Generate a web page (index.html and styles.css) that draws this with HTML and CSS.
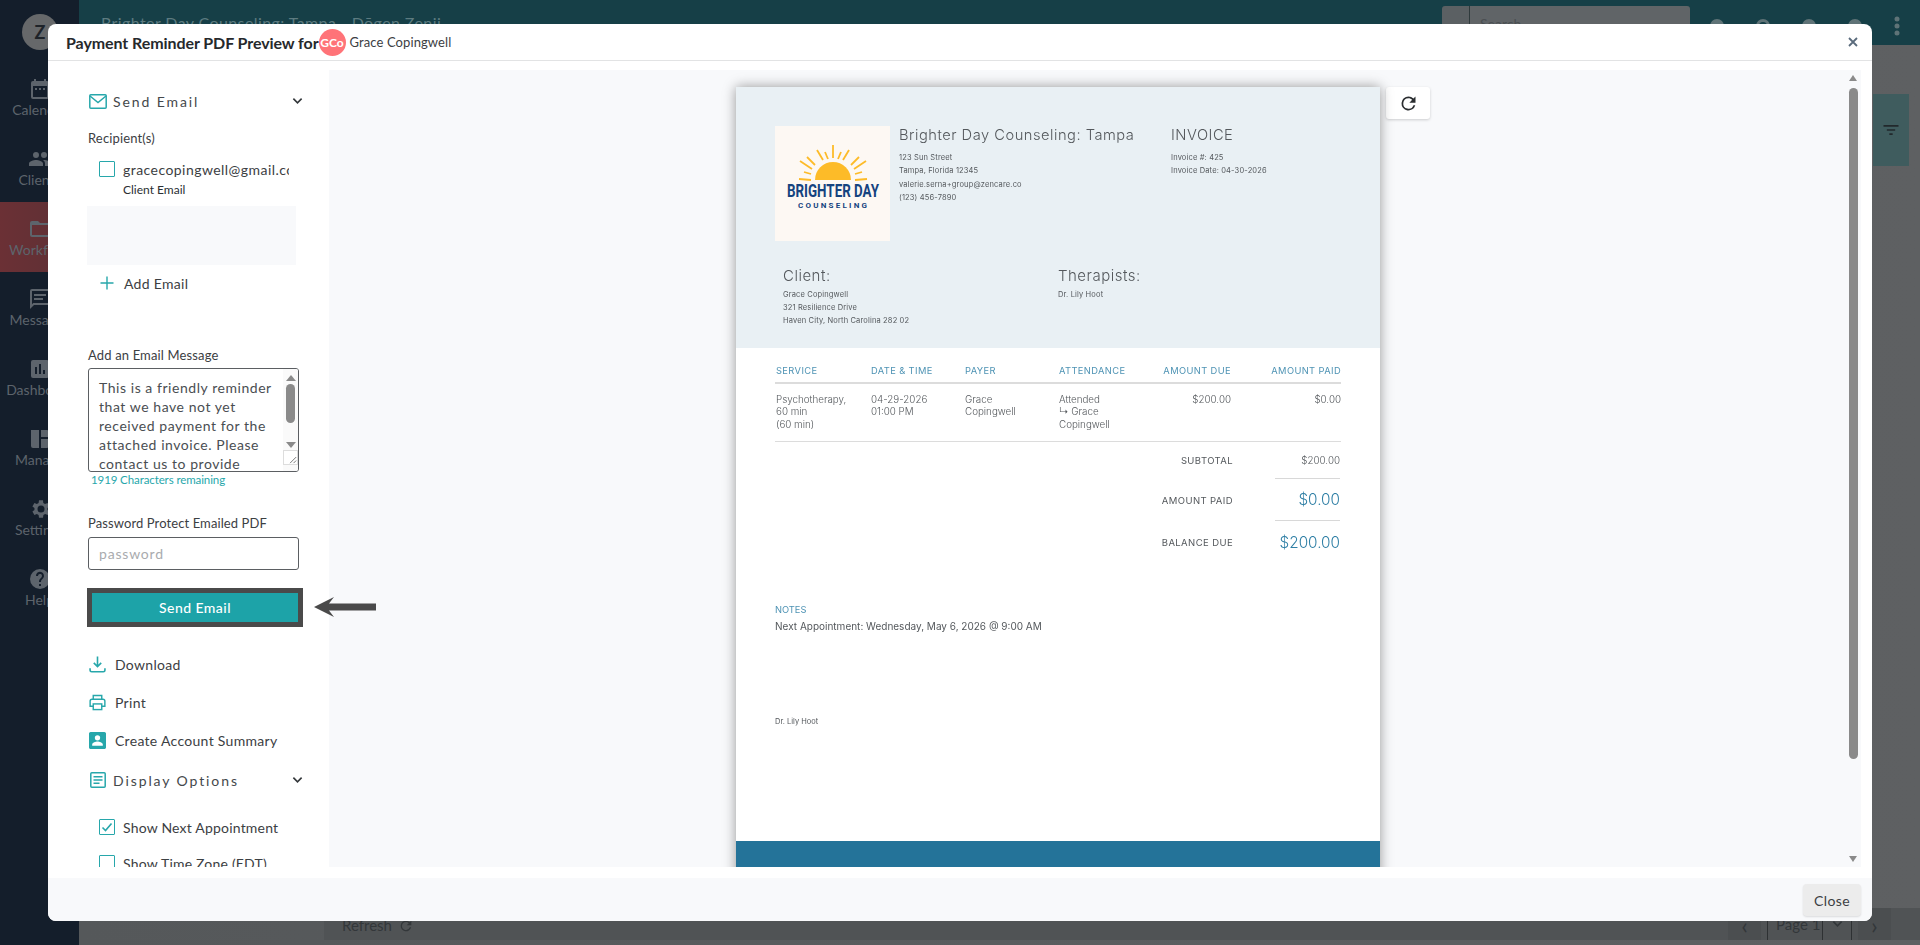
FILE: index.html
```html
<!DOCTYPE html>
<html lang="en">
<head>
  <meta charset="UTF-8">
  <title>Payment Reminder PDF Preview</title>
  <link rel="stylesheet" href="styles.css">
</head>
<body>

  <!-- Dimmed app behind the modal -->
  <div class="app">
    <nav class="app-nav">
      <div class="nav-avatar">Z</div>
      <div class="nav-item">
        <svg viewBox="0 0 24 24"><path d="M19 4h-1V2h-2v2H8V2H6v2H5a2 2 0 0 0-2 2v14a2 2 0 0 0 2 2h14a2 2 0 0 0 2-2V6a2 2 0 0 0-2-2zm0 16H5V9h14z"/><path d="M7 11h2v2H7zm4 0h2v2h-2zm4 0h2v2h-2z"/></svg>
        <span>Calendar</span>
      </div>
      <div class="nav-item">
        <svg viewBox="0 0 24 24"><path d="M16 11a3 3 0 1 0 0-6 3 3 0 0 0 0 6zm-8 0a3 3 0 1 0 0-6 3 3 0 0 0 0 6zm0 2c-2.3 0-7 1.2-7 3.500V19h14v-2.500C15 14.200 10.300 13 8 13zm8 0h-1c1.200.9 2 2 2 3.500V19h6v-2.500c0-2.300-4.700-3.500-7-3.500z"/></svg>
        <span>Clients</span>
      </div>
      <div class="nav-item active">
        <svg viewBox="0 0 24 24"><path d="M20 6h-8l-2-2H4a2 2 0 0 0-2 2v12a2 2 0 0 0 2 2h16a2 2 0 0 0 2-2V8a2 2 0 0 0-2-2zm0 12H4V8h16z"/></svg>
        <span>Workflow</span>
      </div>
      <div class="nav-item">
        <svg viewBox="0 0 24 24"><path d="M20 2H4a2 2 0 0 0-2 2v18l4-4h14a2 2 0 0 0 2-2V4a2 2 0 0 0-2-2zm0 14H5.200L4 17.200V4h16zM6 7h12v2H6zm0 4h9v2H6z"/></svg>
        <span>Messages</span>
      </div>
      <div class="nav-item">
        <svg viewBox="0 0 24 24"><path d="M19 3H5a2 2 0 0 0-2 2v14a2 2 0 0 0 2 2h14a2 2 0 0 0 2-2V5a2 2 0 0 0-2-2zM9 17H7v-7h2zm4 0h-2V7h2zm4 0h-2v-4h2z"/></svg>
        <span>Dashboard</span>
      </div>
      <div class="nav-item">
        <svg viewBox="0 0 24 24"><path d="M3 3h8v18H5a2 2 0 0 1-2-2zm10 0h6a2 2 0 0 1 2 2v5h-8zm0 9h8v7a2 2 0 0 1-2 2h-6z"/></svg>
        <span>Manage</span>
      </div>
      <div class="nav-item">
        <svg viewBox="0 0 24 24"><path d="M19.400 13a7.500 7.500 0 0 0 0-2l2.100-1.600-2-3.500-2.500 1a7.500 7.500 0 0 0-1.700-1L15 3.300h-4l-.4 2.600a7.500 7.500 0 0 0-1.700 1l-2.500-1-2 3.500L6.500 11a7.500 7.500 0 0 0 0 2l-2.100 1.600 2 3.500 2.500-1a7.500 7.500 0 0 0 1.700 1l.4 2.600h4l.4-2.600a7.500 7.500 0 0 0 1.700-1l2.500 1 2-3.500zM13 15.500a3.500 3.500 0 1 1 0-7 3.500 3.500 0 0 1 0 7z"/></svg>
        <span>Settings</span>
      </div>
      <div class="nav-item">
        <svg viewBox="0 0 24 24"><path d="M12 2a10 10 0 1 0 0 20 10 10 0 0 0 0-20zm1 17h-2v-2h2zm2.100-7.700-.9.900c-.7.700-1.200 1.300-1.200 2.800h-2v-.5c0-1.100.5-2.100 1.200-2.800l1.200-1.300A2 2 0 1 0 10 9H8a4 4 0 1 1 7.100 2.300z"/></svg>
        <span>Help</span>
      </div>
    </nav>

    <div class="app-main">
      <header class="app-top">
        <div class="app-title">Brighter Day Counseling: Tampa - Dōgen Zenji</div>
        <div class="app-search">
          <div class="search-icon"></div>
          <div class="search-box">Search</div>
        </div>
        <div class="app-top-icons">
          <i class="dot-icon"></i><i class="dot-icon ring"></i><i class="dot-icon"></i><i class="dot-icon"></i>
          <svg class="more-icon" viewBox="0 0 6 24"><circle cx="3" cy="5" r="2.500"/><circle cx="3" cy="12" r="2.500"/><circle cx="3" cy="19" r="2.500"/></svg>
        </div>
      </header>
      <div class="app-content">
        <div class="filter-tab">
          <svg viewBox="0 0 24 24"><path d="M3 6h18v2H3zm4 5h10v2H7zm3 5h4v2h-4z"/></svg>
        </div>
      </div>
      <footer class="app-bottom">
        <div class="refresh-link">Refresh
          <svg viewBox="0 0 24 24"><path d="M17.650 6.350A7.960 7.960 0 0 0 12 4a8 8 0 1 0 7.750 10h-2.080A6 6 0 1 1 12 6c1.660 0 3.140.690 4.220 1.780L13 11h7V4z"/></svg>
        </div>
        <div class="pager">
          <div class="pager-btn">&#8249;</div>
          <div class="pager-page">
            <span class="pager-num">Page 1</span>
            <svg viewBox="0 0 12 8"><path d="M1.500 1.500L6 6l4.500-4.500"/></svg>
          </div>
          <div class="pager-btn">&#8250;</div>
        </div>
      </footer>
    </div>
  </div>

  <!-- Modal -->
  <div class="modal">
    <div class="modal-header">
      <span class="modal-title">Payment Reminder PDF Preview for</span>
      <span class="avatar">GCo</span>
      <span class="modal-client">Grace Copingwell</span>
      <svg class="modal-x" viewBox="0 0 12 12"><path d="M2 2l8 8M10 2l-8 8"/></svg>
    </div>

    <div class="modal-body">
      <!-- Left options column -->
      <div class="options">
        <div class="opt-head send-head">
          <svg class="teal-icon" viewBox="0 0 18 15"><rect x="0.800" y="0.800" width="16.400" height="13.400" rx="1"/><path d="M1 2l8 6.500L17 2"/></svg>
          <span>Send Email</span>
          <svg class="chev" viewBox="0 0 12 8"><path d="M1.500 1.500L6 6l4.500-4.500"/></svg>
        </div>
        <div class="label recipients">Recipient(s)</div>
        <div class="check-row email-row">
          <span class="check"></span>
          <span class="email-text">gracecopingwell@gmail.com</span>
        </div>
        <div class="email-sub">Client Email</div>
        <div class="email-list"></div>
        <div class="add-email">
          <svg viewBox="0 0 14 14"><path d="M7 0.500v13M0.500 7h13"/></svg>
          <span>Add Email</span>
        </div>

        <div class="label msg-label">Add an Email Message</div>
        <div class="msg-box">
          <div class="msg-text">This is a friendly reminder that we have not yet received payment for the attached invoice. Please contact us to provide payment.</div>
          <div class="msg-bar">
            <i class="arrow-up"></i>
            <b class="msg-thumb"></b>
            <i class="arrow-down"></i>
            <svg class="msg-grip" viewBox="0 0 15 15"><path d="M14 7l-7 7M14 11l-3 3"/></svg>
          </div>
        </div>
        <div class="chars-left">1919 Characters remaining</div>

        <div class="label pass-label">Password Protect Emailed PDF</div>
        <div class="pass-input">password</div>

        <button class="send-btn">Send Email</button>

        <div class="action download">
          <svg class="teal-icon" viewBox="0 0 16 16"><path d="M8 0.500v9M4.500 6.500L8 10l3.500-3.500M1 11.500v1.800c0 .9.600 1.500 1.500 1.500h11c.9 0 1.500-.6 1.500-1.500v-1.800"/></svg>
          <span>Download</span>
        </div>
        <div class="action">
          <svg class="teal-icon" viewBox="0 0 18 17"><path d="M4.500 5V1h9v4M4.500 12.500H1.200V7c0-1.100.9-2 2-2h11.600c1.100 0 2 .9 2 2v5.500h-3.300"/><rect x="4.500" y="10" width="9" height="6"/></svg>
          <span>Print</span>
        </div>
        <div class="action">
          <svg class="fill-icon" viewBox="0 0 16 16"><path d="M14.500 0h-13C.7 0 0 .7 0 1.500v13c0 .8.700 1.500 1.500 1.500h13c.8 0 1.500-.7 1.500-1.500v-13C16 .7 15.300 0 14.500 0zM8 3a2.500 2.500 0 1 1 0 5 2.500 2.500 0 0 1 0-5zm5 10H3v-1.300C3 10 6.300 9 8 9s5 1 5 2.700z"/></svg>
          <span>Create Account Summary</span>
        </div>

        <div class="opt-head display-head">
          <svg class="teal-icon" viewBox="0 0 16 16"><rect x="0.800" y="0.800" width="14.400" height="14.400" rx="1"/><path d="M3.500 4.800h9M3.500 8h9M3.500 11.200h6"/></svg>
          <span>Display Options</span>
          <svg class="chev" viewBox="0 0 12 8"><path d="M1.500 1.500L6 6l4.500-4.500"/></svg>
        </div>
        <div class="check-row next-row">
          <span class="check"><svg viewBox="0 0 14 14"><path d="M2.500 7.500L5.500 10.500 11.500 3.500"/></svg></span>
          <span>Show Next Appointment</span>
        </div>
        <div class="check-row zone-row">
          <span class="check"></span>
          <span>Show Time Zone (EDT)</span>
        </div>
      </div>

      <!-- PDF preview -->
      <div class="preview">
        <div class="preview-scroll">
          <div class="page">
            <div class="inv-head">
              <div class="inv-top">
                <svg class="inv-logo" viewBox="0 0 115 115">
                  <rect width="115" height="115" fill="#fdf8f3"/>
                  <path d="M40 54a18 18 0 0 1 36 0z" fill="#fdbb28"/>
                  <g stroke="#fdbb28" stroke-width="1.800">
                    <line x1="24" y1="53" x2="36" y2="54"/>
                    <line x1="29" y1="46" x2="36" y2="48"/>
                    <line x1="25" y1="35" x2="37" y2="43"/>
                    <line x1="32" y1="31" x2="40" y2="39"/>
                    <line x1="42" y1="24" x2="48" y2="34"/>
                    <line x1="50" y1="26" x2="53" y2="33"/>
                    <line x1="58" y1="19" x2="58" y2="32"/>
                    <line x1="66" y1="26" x2="63" y2="33"/>
                    <line x1="74" y1="24" x2="68" y2="34"/>
                    <line x1="84" y1="31" x2="76" y2="39"/>
                    <line x1="91" y1="35" x2="79" y2="43"/>
                    <line x1="87" y1="46" x2="80" y2="48"/>
                    <line x1="92" y1="53" x2="80" y2="54"/>
                  </g>
                  <text class="logo-main" x="12" y="71" textLength="92" lengthAdjust="spacingAndGlyphs">BRIGHTER DAY</text>
                  <text class="logo-sub" x="23" y="82" textLength="69">COUNSELING</text>
                </svg>
                <div class="inv-company">
                  <div class="inv-title">Brighter Day Counseling: Tampa</div>
                  <div class="inv-lines">
                    <div>123 Sun Street</div>
                    <div>Tampa, Florida 12345</div>
                    <div>valerie.serna+group@zencare.co</div>
                    <div>(123) 456-7890</div>
                  </div>
                </div>
                <div class="inv-meta">
                  <div class="inv-title">INVOICE</div>
                  <div class="inv-lines">
                    <div>Invoice #: 425</div>
                    <div>Invoice Date: 04-30-2026</div>
                  </div>
                </div>
              </div>
              <div class="inv-people">
                <div class="inv-client">
                  <div class="inv-title">Client:</div>
                  <div class="inv-lines">
                    <div>Grace Copingwell</div>
                    <div>321 Resilience Drive</div>
                    <div>Haven City, North Carolina 282 02</div>
                  </div>
                </div>
                <div>
                  <div class="inv-title">Therapists:</div>
                  <div class="inv-lines">
                    <div>Dr. Lily Hoot</div>
                  </div>
                </div>
              </div>
            </div>

            <div class="inv-table">
              <div class="inv-row inv-row-head">
                <div>Service</div>
                <div>Date &amp; Time</div>
                <div>Payer</div>
                <div>Attendance</div>
                <div class="num">Amount Due</div>
                <div class="num">Amount Paid</div>
              </div>
              <div class="inv-row inv-row-body">
                <div>Psychotherapy,<br>60 min<br>(60 min)</div>
                <div>04-29-2026<br>01:00 PM</div>
                <div>Grace<br>Copingwell</div>
                <div>Attended<br>&#8627; Grace<br>Copingwell</div>
                <div class="num">$200.00</div>
                <div class="num">$0.00</div>
              </div>
            </div>

            <div class="inv-totals">
              <div class="total-row">
                <div class="total-label">Subtotal</div>
                <div class="total-val small">$200.00</div>
              </div>
              <div class="total-row">
                <div class="total-label">Amount Paid</div>
                <div class="total-val">$0.00</div>
              </div>
              <div class="total-row last">
                <div class="total-label">Balance Due</div>
                <div class="total-val">$200.00</div>
              </div>
            </div>

            <div class="inv-notes">Notes</div>
            <div class="inv-next">Next Appointment: Wednesday, May 6, 2026 @ 9:00 AM</div>
            <div class="inv-sign">Dr. Lily Hoot</div>
            <div class="inv-band"></div>
          </div>
          <button class="reload-btn">
            <svg viewBox="0 0 24 24"><path d="M17.650 6.350A7.960 7.960 0 0 0 12 4a8 8 0 1 0 7.750 10h-2.080A6 6 0 1 1 12 6c1.660 0 3.140.690 4.220 1.780L13 11h7V4z"/></svg>
          </button>
        </div>
        <div class="preview-bar">
          <i class="arrow-up"></i>
          <b class="preview-thumb"></b>
          <i class="arrow-down"></i>
        </div>
      </div>

      <!-- Tutorial arrow pointing at the send button -->
      <svg class="send-arrow" viewBox="0 0 62 20"><path d="M0 10L20 0l-5 6.500h47v7H15l5 6.500z"/></svg>
    </div>

    <div class="modal-footer">
      <button class="close-btn">Close</button>
    </div>
  </div>

</body>
</html>
```

FILE: styles.css
```css
/* General styles */
html, body {
  height: 100%;
}

body {
  margin: 0;
  overflow: hidden;
  font-family: 'Lato', sans-serif;
  color: #3c4043;
  background-color: #55585a;
}

button {
  font-family: inherit;
  cursor: pointer;
}

/* App behind the modal */
.app {
  display: flex;
  height: 945px;
  background-color: #55585a;
}

.app-nav {
  width: 79px;
  flex-shrink: 0;
  background-color: #141e2b;
  display: flex;
  flex-direction: column;
  align-items: stretch;
}

.nav-avatar {
  width: 36px;
  height: 36px;
  margin: 14px 0 12px 22px;
  border-radius: 50%;
  background-color: #66686a;
  color: #1e2329;
  font-weight: 700;
  font-size: 18px;
  line-height: 36px;
  text-align: center;
}

.nav-item {
  height: 70px;
  display: flex;
  flex-direction: column;
  align-items: center;
  justify-content: center;
  color: #5d646c;
  font-size: 14px;
  white-space: nowrap;
}

.nav-item svg {
  width: 24px;
  height: 24px;
  fill: #5d646c;
}

.nav-item.active {
  background: linear-gradient(90deg, #6b3035, #5c3035);
}

.app-main {
  flex: 1;
  display: flex;
  flex-direction: column;
  background: linear-gradient(90deg, #55585a, #5e6062);
}

.app-top {
  height: 45px;
  background-color: #163f47;
  display: flex;
  align-items: flex-start;
  padding-left: 22px;
  padding-right: 20px;
}

.app-title {
  font-size: 16px;
  color: #5d7b80;
  margin-top: 13px;
  letter-spacing: 0.4px;
}

.app-search {
  display: flex;
  margin-left: auto;
  margin-top: 6px;
  height: 30px;
}

.search-icon {
  width: 27px;
  background-color: #5b6063;
  border-right: 1px solid #2f3a3c;
  border-radius: 3px 0 0 3px;
}

.search-box {
  width: 220px;
  padding: 9px 0 0 10px;
  box-sizing: border-box;
  background-color: #606467;
  border-radius: 0 3px 3px 0;
  color: #4a4f52;
  font-size: 14px;
}

.app-top-icons {
  display: flex;
  align-items: center;
  gap: 32px;
  margin-left: 20px;
  margin-top: 14px;
}

.dot-icon {
  width: 14px;
  height: 14px;
  border-radius: 50%;
  background-color: #5f7377;
}

.dot-icon.ring {
  background-color: transparent;
  border: 3px solid #5f7377;
  box-sizing: border-box;
}

.more-icon {
  width: 6px;
  height: 24px;
  fill: #5f7377;
}

.app-content {
  flex: 1;
  display: flex;
  justify-content: flex-end;
  padding: 49px 11px 0 0;
}

.filter-tab {
  width: 36px;
  height: 72px;
  background-color: #3f5c5e;
  display: flex;
  align-items: center;
  justify-content: center;
}

.filter-tab svg {
  width: 20px;
  height: 20px;
  fill: #22292c;
}

.app-bottom {
  height: 32px;
  margin: 0 0 5px 245px;
  background-color: #505355;
  display: flex;
  justify-content: space-between;
  padding: 0 29px 0 18px;
  color: #33373a;
  font-size: 15px;
}

.refresh-link {
  padding-top: 8px;
  display: flex;
  align-items: flex-start;
  gap: 6px;
}

.refresh-link svg {
  width: 16px;
  height: 16px;
  fill: #33373a;
  margin-top: 2px;
}

.pager {
  display: flex;
  gap: 6px;
}

.pager-btn {
  width: 33px;
  background-color: #4b4e50;
  text-align: center;
  font-size: 24px;
  line-height: 34px;
}

.pager-page {
  width: 85px;
  box-sizing: border-box;
  border-left: 1px solid #2e3133;
  border-right: 1px solid #2e3133;
  display: flex;
}

.pager-num {
  width: 55px;
  padding: 7px 0 0 8px;
  box-sizing: border-box;
  border-right: 1px solid #2e3133;
}

.pager-page svg {
  width: 11px;
  height: 8px;
  margin: 12px 0 0 9px;
  fill: none;
  stroke: #33373a;
  stroke-width: 1.800;
}

/* Modal */
.modal {
  position: absolute;
  left: 48px;
  top: 24px;
  width: 1824px;
  height: 897px;
  background-color: #fff;
  border-radius: 8px;
  display: flex;
  flex-direction: column;
  overflow: hidden;
}

.modal-header {
  height: 36px;
  flex-shrink: 0;
  border-bottom: 1px solid #e2e3e4;
  display: flex;
  align-items: center;
  padding-left: 18px;
  padding-right: 13px;
}

.modal-title {
  font-size: 16px;
  font-weight: 700;
  letter-spacing: -0.080px;
  color: #26292c;
  white-space: nowrap;
}

.avatar {
  width: 27px;
  height: 27px;
  border-radius: 50%;
  background-color: #ff7378;
  color: #fff;
  font-size: 12px;
  font-weight: 700;
  line-height: 27px;
  text-align: center;
  overflow: hidden;
  flex-shrink: 0;
}

.modal-client {
  margin-left: 4px;
  font-size: 13px;
  letter-spacing: 0.100px;
}

.modal-x {
  width: 12px;
  height: 12px;
  margin-left: auto;
  fill: none;
  stroke: #5a6b7c;
  stroke-width: 1.800;
}

.modal-body {
  height: 817px;
  flex-shrink: 0;
  display: flex;
}

/* Left options column */
.options {
  width: 281px;
  flex-shrink: 0;
  height: 806px;
  overflow: hidden;
  padding-left: 41px;
  box-sizing: border-box;
  font-size: 14px;
}

.teal-icon {
  fill: none;
  stroke: #27a7ab;
  stroke-width: 1.500;
  flex-shrink: 0;
}

.fill-icon {
  fill: #27a7ab;
  flex-shrink: 0;
}

.opt-head {
  height: 20px;
  width: 214px;
  display: flex;
  align-items: center;
  font-size: 14px;
  letter-spacing: 1.900px;
  color: #44484b;
}

.opt-head .teal-icon {
  width: 18px;
  height: 15px;
  margin-right: 6px;
}

.send-head {
  margin-top: 30px;
}

.display-head {
  margin-top: 20px;
}

.display-head .teal-icon {
  width: 16px;
  height: 16px;
  margin-left: 1px;
  margin-right: 7px;
}

.chev {
  width: 11px;
  height: 8px;
  margin-left: auto;
  fill: none;
  stroke: #33373a;
  stroke-width: 1.800;
}

.label {
  height: 18px;
  margin-left: -1px;
  line-height: 18px;
  font-size: 13px;
  letter-spacing: 0.150px;
}

.recipients {
  margin-top: 18px;
}

.msg-label {
  margin-top: 53px;
}

.pass-label {
  margin-top: 26px;
  letter-spacing: 0.100px;
}

.check-row {
  height: 18px;
  margin-left: 10px;
  display: flex;
  align-items: center;
  gap: 8px;
  white-space: nowrap;
  letter-spacing: 0.200px;
}

.check {
  width: 16px;
  height: 16px;
  box-sizing: border-box;
  border: 1.500px solid #27a7ab;
  border-radius: 1px;
  flex-shrink: 0;
  display: flex;
}

.check svg {
  fill: none;
  stroke: #27a7ab;
  stroke-width: 1.600;
}

.email-row {
  margin-top: 13px;
  width: 190px;
  overflow: hidden;
}

.email-text {
  font-size: 14px;
  letter-spacing: 0.450px;
}

.email-sub {
  margin: 3px 0 0 34px;
  height: 18px;
  line-height: 18px;
  font-size: 12px;
  color: #2a2f33;
}

.email-list {
  width: 209px;
  height: 59px;
  margin: 7px 0 0 -2px;
  background-color: #f8f9fb;
}

.add-email {
  height: 20px;
  margin: 8px 0 0 11px;
  display: flex;
  align-items: center;
  gap: 10px;
  font-size: 14px;
  letter-spacing: 0.300px;
}

.add-email svg {
  width: 14px;
  height: 14px;
  fill: none;
  stroke: #27a7ab;
  stroke-width: 1.400;
}

.msg-box {
  width: 211px;
  height: 104px;
  margin: 4px 0 0 -1px;
  box-sizing: border-box;
  border: 1px solid #5b5e62;
  border-radius: 3px;
  display: flex;
  overflow: hidden;
}

.msg-text {
  flex: 1;
  padding: 9px 0 0 10px;
  font-size: 14px;
  line-height: 19px;
  letter-spacing: 0.550px;
  color: #4a4e52;
}

.msg-bar {
  width: 15px;
  flex-shrink: 0;
  display: flex;
  flex-direction: column;
  align-items: center;
  padding-top: 6px;
  box-sizing: border-box;
  background-color: #fafafa;
}

.arrow-up,
.arrow-down {
  width: 0;
  height: 0;
  border-left: 5px solid transparent;
  border-right: 5px solid transparent;
  flex-shrink: 0;
}

.arrow-up {
  border-bottom: 6px solid #8a8a8a;
}

.arrow-down {
  border-top: 6px solid #8a8a8a;
}

.msg-thumb {
  width: 9px;
  height: 39px;
  margin-top: 3px;
  margin-bottom: 19px;
  border-radius: 5px;
  background-color: #8a8a8a;
  flex-shrink: 0;
}

.msg-grip {
  width: 15px;
  height: 15px;
  margin-top: 2px;
  flex-shrink: 0;
  background-color: #fff;
  border: 1px solid #ddd;
  box-sizing: border-box;
  fill: none;
  stroke: #666;
  stroke-width: 1;
}

.chars-left {
  height: 16px;
  line-height: 16px;
  margin-left: 2px;
  font-size: 11.500px;
  letter-spacing: -0.100px;
  color: #27a7ab;
}

.pass-input {
  width: 211px;
  height: 33px;
  margin: 5px 0 0 -1px;
  padding-left: 10px;
  box-sizing: border-box;
  border: 1px solid #5b5e62;
  border-radius: 3px;
  line-height: 31px;
  font-size: 14px;
  letter-spacing: 0.800px;
  color: #a9abae;
}

.send-btn {
  display: block;
  width: 216px;
  height: 39px;
  margin: 18px 0 0 -2px;
  box-sizing: border-box;
  border: 5px solid #4a4a4a;
  background-color: #1da3a8;
  color: #fff;
  font-size: 14px;
  font-weight: 500;
  letter-spacing: 0.450px;
  padding: 0;
}

/* lies over the edge of the options column */
.send-arrow {
  position: absolute;
  left: 266px;
  top: 573px;
  width: 62px;
  height: 20px;
  fill: #4a4a4a;
}

.action {
  height: 20px;
  margin-top: 18px;
  display: flex;
  align-items: center;
  letter-spacing: 0.300px;
}

.action.download {
  margin-top: 27px;
}

.action svg {
  width: 17px;
  height: 17px;
  margin-right: 9px;
}

.next-row {
  margin-top: 28px;
}

.zone-row {
  margin-top: 18px;
}

/* PDF preview */
.preview {
  width: 1532px;
  height: 797px;
  margin-top: 9px;
  flex-shrink: 0;
  background-color: #f8f9fb;
  display: flex;
}

.preview-scroll {
  flex: 1;
  display: flex;
  align-items: flex-start;
  gap: 6px;
  padding: 17px 0 0 407px;
  overflow: hidden;
}

.page {
  width: 644px;
  height: 800px;
  flex-shrink: 0;
  background-color: #fff;
  box-shadow: 0 0 12px rgba(0, 0, 0, 0.4);
  display: flex;
  flex-direction: column;
  font-family: 'Inter', 'Lato', sans-serif;
  color: #54585c;
  filter: blur(0.3px);
}

.inv-head {
  height: 261px;
  flex-shrink: 0;
  padding: 39px 0 0 39px;
  box-sizing: border-box;
  background-color: #e9f0f4;
}

.inv-top {
  display: flex;
  height: 115px;
}

.inv-logo {
  width: 115px;
  height: 115px;
  flex-shrink: 0;
}

.logo-main {
  font-family: 'Roboto', sans-serif;
  font-size: 19px;
  font-weight: 700;
  fill: #15437f;
}

.logo-sub {
  font-family: 'Roboto', sans-serif;
  font-size: 8px;
  font-weight: 700;
  fill: #15437f;
}

.inv-company {
  width: 272px;
  margin-left: 9px;
  flex-shrink: 0;
}

.inv-title {
  height: 18px;
  line-height: 18px;
  font-size: 14.700px;
  font-weight: 300;
  letter-spacing: 0.500px;
  white-space: nowrap;
}

.inv-lines {
  margin-top: 7px;
  font-size: 7.500px;
  line-height: 13.400px;
  letter-spacing: 0.150px;
  white-space: nowrap;
}

.inv-people {
  display: flex;
  margin: 25px 0 0 8px;
}

.inv-people .inv-title {
  height: 20px;
  line-height: 20px;
  font-size: 15px;
}

.inv-people .inv-lines {
  margin-top: 2px;
  line-height: 13px;
}

.inv-client {
  width: 275px;
  flex-shrink: 0;
}

.inv-table {
  margin: 16px 39px 0 39px;
}

.inv-row {
  display: grid;
  grid-template-columns: 95px 94px 94px 80px 93px 110px;
}

.inv-row > div {
  padding-left: 1px;
}

.inv-row-head {
  height: 14px;
  line-height: 14px;
  padding-bottom: 4px;
  border-bottom: 2px solid #dcdcdc;
  font-size: 9.300px;
  letter-spacing: 0.400px;
  text-transform: uppercase;
  color: #4e93b4;
  white-space: nowrap;
}

.inv-row-body {
  padding: 10px 0 10px;
  border-bottom: 1px solid #dcdcdc;
  font-size: 9.800px;
  line-height: 12.400px;
  font-weight: 300;
  white-space: nowrap;
}

.num {
  text-align: right;
}

.inv-totals {
  margin: 0 40px 0 39px;
  font-size: 9.500px;
}

.total-row {
  display: flex;
  justify-content: flex-end;
  height: 42px;
}

.total-row:first-child {
  height: 37px;
}

.total-label {
  align-self: center;
  margin-right: 42px;
  text-transform: uppercase;
  letter-spacing: 0.400px;
}

.total-val {
  width: 65px;
  display: flex;
  align-items: center;
  justify-content: flex-end;
  border-bottom: 1px solid #d8d8d8;
  font-size: 15.300px;
  font-weight: 300;
  color: #2f7fa5;
  white-space: nowrap;
}

.total-val.small {
  font-size: 9.800px;
  color: #54585c;
}

.last .total-val {
  border-bottom: none;
}

.inv-notes {
  height: 14px;
  line-height: 14px;
  margin: 40px 0 0 39px;
  font-size: 9.300px;
  text-transform: uppercase;
  color: #4e93b4;
}

.inv-next {
  height: 14px;
  line-height: 14px;
  margin: 2px 0 0 39px;
  font-size: 10px;
}

.inv-sign {
  height: 12px;
  line-height: 12px;
  margin: 83px 0 0 39px;
  font-size: 7.500px;
}

.inv-band {
  margin-top: auto;
  height: 46px;
  flex-shrink: 0;
  background-color: #247399;
}

.reload-btn {
  width: 44px;
  height: 32px;
  flex-shrink: 0;
  padding: 0;
  background-color: #fff;
  border: none;
  border-radius: 3px;
  box-shadow: 0 1px 3px rgba(0, 0, 0, 0.18);
  display: flex;
  align-items: center;
  justify-content: center;
}

.reload-btn svg {
  width: 21px;
  height: 21px;
  fill: #2b2e31;
}

.preview-bar {
  width: 12px;
  margin-right: 2px;
  flex-shrink: 0;
  display: flex;
  flex-direction: column;
  align-items: center;
  padding-top: 5px;
  box-sizing: border-box;
}

.preview-bar .arrow-up,
.preview-bar .arrow-down {
  border-left-width: 4.500px;
  border-right-width: 4.500px;
}

.preview-thumb {
  width: 9px;
  height: 671px;
  margin: 7px 0 97px;
  flex-shrink: 0;
  border-radius: 5px;
  background-color: #8a8a8a;
}

.modal-footer {
  flex: 1;
  background-color: #f8f9fb;
  display: flex;
  justify-content: flex-end;
  align-items: flex-start;
  padding: 6px 11px 0 0;
}

.close-btn {
  width: 58px;
  height: 32px;
  padding: 0;
  border: none;
  border-radius: 4px;
  background-color: #ececec;
  box-shadow: 0 1px 2px rgba(0, 0, 0, 0.12);
  font-size: 14px;
  letter-spacing: 0.400px;
  color: #3c4043;
}
```
